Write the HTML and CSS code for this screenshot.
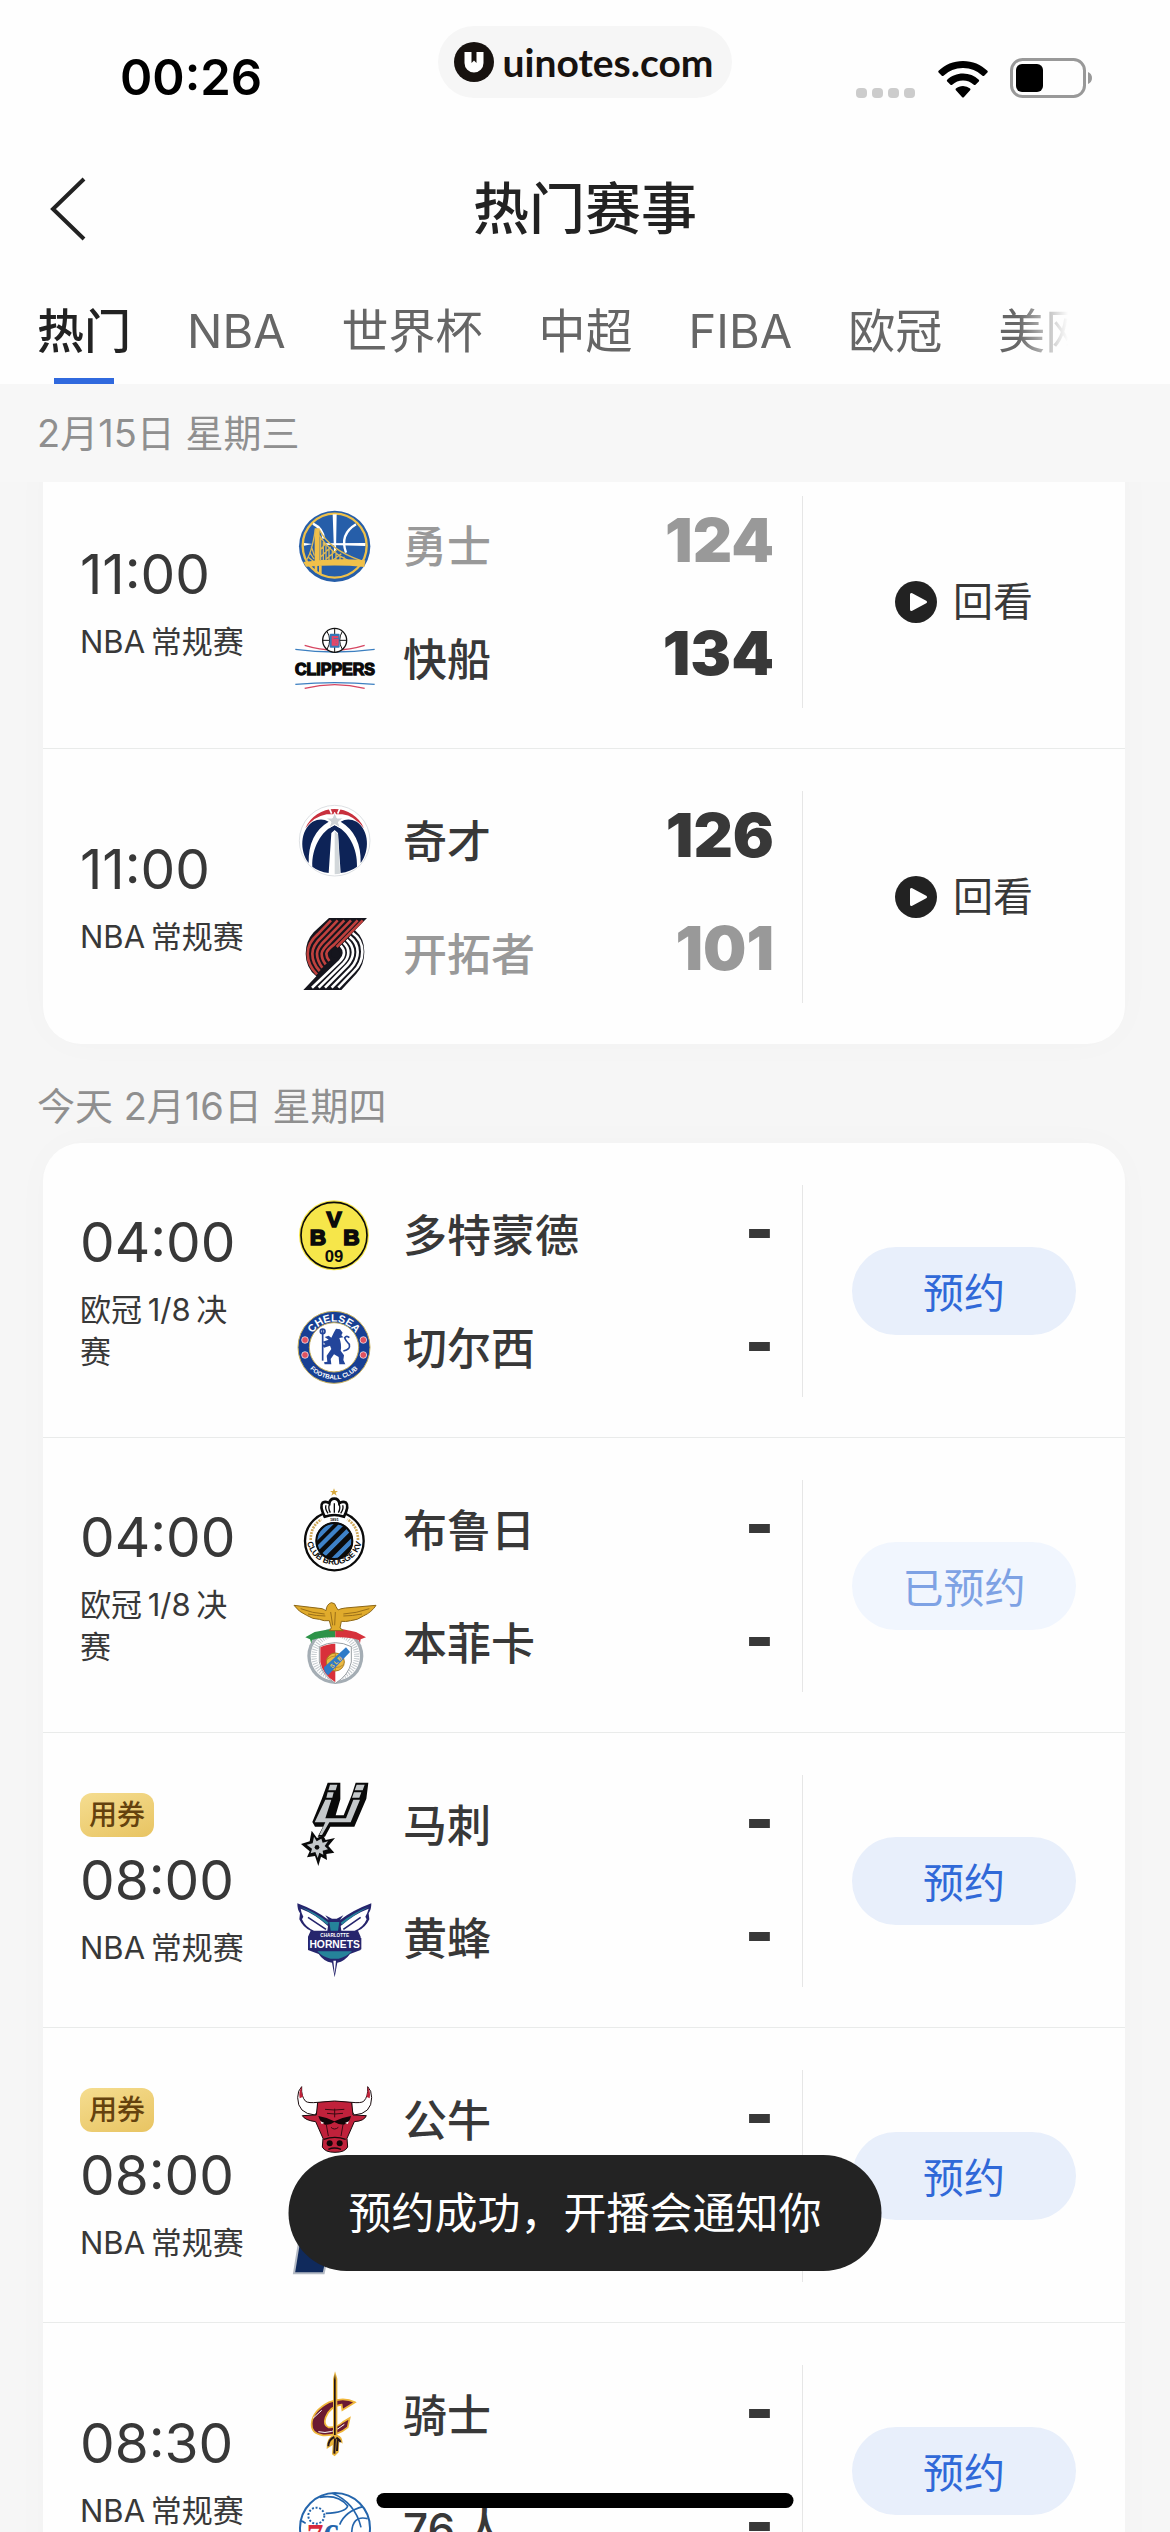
FILE: index.html
```html
<!DOCTYPE html>
<html lang="zh-CN">
<head>
<meta charset="utf-8">
<meta name="viewport" content="width=device-width, initial-scale=1">
<title>热门赛事</title>
<link rel="stylesheet" href="styles.css">
</head>
<body>
<div class="app">
  <header class="top">
    <div class="status">
      <span class="status-time">00:26</span>
      <span class="status-pill">
        <svg class="pill-logo" viewBox="0 0 40 40" aria-hidden="true"><circle cx="20" cy="20" r="20" fill="#17120f"/><path d="M10.500 10v11a9.500 9.500 0 0 0 19 0V10h-7v11l-2.500-2.500L17.500 21V10z" fill="#fff"/></svg>
        uinotes.com
      </span>
      <span class="status-icons">
        <svg class="dots" viewBox="0 0 60 10" aria-hidden="true"><g fill="#ccc"><rect width="11" height="10" rx="4"/><rect x="16" width="11" height="10" rx="4"/><rect x="32" width="11" height="10" rx="4"/><rect x="48" width="11" height="10" rx="4"/></g></svg>
        <svg class="wifi" viewBox="0 0 50 37" aria-hidden="true"><path d="M25 0C15.500 0 6.800 3.700.600 9.800c-.500.500-.500 1.200 0 1.700l3.200 3.200c.500.500 1.200.500 1.700 0A28 28 0 0 1 25 7a28 28 0 0 1 19.500 7.700c.500.500 1.200.500 1.700 0l3.200-3.200c.500-.500.500-1.200 0-1.700C43.200 3.700 34.500 0 25 0z"/><path d="M25 12.500c-6.100 0-11.600 2.300-15.800 6.200-.500.500-.500 1.200 0 1.700l3.300 3.300c.500.500 1.200.500 1.700 0a15.800 15.800 0 0 1 21.600 0c.500.500 1.200.500 1.700 0l3.300-3.300c.500-.500.500-1.200 0-1.700A23 23 0 0 0 25 12.500z"/><path d="M25 25c-2.700 0-5.200 1-7.100 2.600-.500.500-.500 1.200 0 1.700l6.300 6.900c.500.400 1.100.400 1.600 0l6.300-6.900c.500-.500.500-1.200 0-1.700A11 11 0 0 0 25 25z"/></svg>
        <svg class="battery" viewBox="0 0 82 40" aria-hidden="true"><rect x="1.500" y="1.500" width="73" height="37" rx="11" fill="none" stroke="#999" stroke-width="3"/><rect x="6" y="6" width="27" height="28" rx="6"/><path d="M78 14v12c2.500-1 4-3.300 4-6s-1.500-5-4-6z" fill="#999"/></svg>
      </span>
    </div>
    <div class="titlebar">
      <button class="back" type="button" aria-label="返回"><svg viewBox="0 0 36 64" aria-hidden="true"><path d="M34 2 3 32l31 30" fill="none" stroke="#222" stroke-width="4"/></svg></button>
      <h1>热门赛事</h1>
    </div>
    <nav class="tabs">
      <button class="tab active" type="button">热门</button>
      <button class="tab" type="button">NBA</button>
      <button class="tab" type="button">世界杯</button>
      <button class="tab" type="button">中超</button>
      <button class="tab" type="button">FIBA</button>
      <button class="tab" type="button">欧冠</button>
      <button class="tab" type="button">美网</button>
    </nav>
  </header>

  <main class="schedule">
    <h2 class="date pinned">2月15日 星期三</h2>
    <ul class="card continued">
      <li class="match">
        <div class="when"><time>11:00</time><span class="league">NBA&thinsp;常规赛</span></div>
        <div class="teams">
          <div class="team lost">
            <svg class="crest" viewBox="39 41 252 252" aria-hidden="true">
              <circle cx="164" cy="168" r="107" fill="#265ea9"/><circle cx="164" cy="166" r="96" fill="none" stroke="#efc14a" stroke-width="7"/>
              <g fill="none" stroke="#fff"><path d="M99 100q30 15 32 45" stroke-width="8"/><path d="M228 102q-50 30-30 85" stroke-width="7"/></g>
              <path d="M158 72h12l-2 110h-6zM130 159l126-1v9l-126-4zM72 158l26 3-26 5z" fill="#fff"/>
              <path d="M104 114h15v102h-15zM104 225h8v24l-8-4zM117 225h8v30l-8-3z" fill="#f0c04a"/>
              <path d="M76 213q18-18 30-95M118 118q30 60 125 93M118 135q30 50 90 77M84 200l16 13M89 186l13 20M94 168l9 28M122 140v70M130 150v62M138 162v50M147 170v42M157 178v34M168 186v27M180 193v20M192 199v14M122 200l30-30M122 178l16-20M138 207l32-28M158 210l26-20" fill="none" stroke="#dcb854" stroke-width="4"/>
              <path d="M70 215q90-14 186-5l-3 20q-80-8-175-1z" fill="#f0c04a"/>
            </svg>
            <span class="name">勇士</span><span class="score">124</span>
          </div>
          <div class="team">
            <svg class="crest" viewBox="39 379 252 252" aria-hidden="true">
              <path d="M74 464q45 14 90 14t90-14" fill="none" stroke="#d64560" stroke-width="4"/><path d="M46 476q60 8 118 8t120-8M46 581q118-10 238 0" fill="none" stroke="#3c7fc0" stroke-width="4"/><path d="M74 593q90-22 180 0" fill="none" stroke="#d64560" stroke-width="4"/>
              <circle cx="164" cy="449" r="36" fill="#fff" stroke="#111" stroke-width="4"/><path d="M128 449h72M164 413v72M141 422q16 27 0 54M187 422q-16 27 0 54" fill="none" stroke="#111" stroke-width="3"/>
              <rect x="149" y="429" width="30" height="42" rx="3" fill="#3578b8"/><path d="M175 439h-17v23h17M164 461v-14h9v14M164 455h9" fill="none" stroke="#e2476a" stroke-width="6"/>
              <text class="mark clippers" x="165" y="552">CLIPPERS</text>
            </svg>
            <span class="name">快船</span><span class="score">134</span>
          </div>
        </div>
        <div class="action"><a class="replay" href="#"><svg viewBox="0 0 42 42" aria-hidden="true"><circle cx="21" cy="21" r="21" fill="#222"/><path d="M16.500 13.500v15l14-7.500z" fill="#fff" stroke="#fff" stroke-width="3" stroke-linejoin="round"/></svg>回看</a></div>
      </li>
      <li class="match">
        <div class="when"><time>11:00</time><span class="league">NBA&thinsp;常规赛</span></div>
        <div class="teams">
          <div class="team">
            <svg class="crest" viewBox="39 25 252 252" aria-hidden="true">
              <circle cx="164" cy="150" r="106" fill="#fff" stroke="#ccd0d4" stroke-width="2"/>
              <path d="M76 113a96 96 0 0 1 176 0q-30-38-65-42l-47 0q-38 6-64 42z" fill="#c8303d"/>
              <path d="M147 50l8 19M181 50l-8 19" stroke="#fff" stroke-width="5"/>
              <path d="M86 217C58 180 60 120 98 93q26-13 48 0Q84 130 86 217zM242 217c28-37 26-97-12-124q-26-13-48 0 62 37 60 124z" fill="#0d2357"/>
              <path d="M97 228c-2-54 26-108 67-124 41 16 69 70 67 124q-20 15-49 19l-8-120-10-9-10 9-8 120q-30-4-49-19z" fill="#0d2357"/>
              <path d="M164 122l10 8 6 119-16 2z" fill="#d2d7da"/>
              <path d="M164 65l7 17h19l-15 12 6 18-17-11-17 11 6-18-15-12h19z" fill="#cdd2d6" stroke="#fff" stroke-width="3"/>
            </svg>
            <span class="name">奇才</span><span class="score">126</span>
          </div>
          <div class="team lost">
            <svg class="crest" viewBox="39 366 252 252" aria-hidden="true">
              <path d="M147 384h114l-36 37q28 24 28 64 0 40-24 66l-45 49H70l39-41q-32-26-32-68 0-38 24-64z" fill="#15151d"/>
              <g fill="none" stroke="#c0413e" stroke-width="8"><path d="M153 391l-40 42q-30 26-30 58 0 34 28 62"/><path d="M173 391l-46 48q-30 28-30 52 0 28 22 52"/><path d="M193 391l-54 56q-28 26-28 44 0 20 16 42"/><path d="M213 391l-62 64q-26 24-26 36 0 16 12 32"/><path d="M233 391l-70 72q-24 18-24 28t9 22"/><path d="M248 391l-78 80"/></g>
              <g fill="none" stroke="#fff" stroke-width="8"><path d="M218 429q29 20 29 56 0 34-26 60l-46 48"/><path d="M209 440q24 18 24 46 0 26-20 48l-58 59"/><path d="M200 449q19 16 19 38 0 20-17 38l-67 68"/><path d="M191 458q14 12 14 30 0 16-15 32l-74 73"/><path d="M182 467q10 10 10 22 0 12-12 24l-84 80"/></g>
              <circle cx="166" cy="491" r="13" fill="#15151d"/>
            </svg>
            <span class="name">开拓者</span><span class="score">101</span>
          </div>
        </div>
        <div class="action"><a class="replay" href="#"><svg viewBox="0 0 42 42" aria-hidden="true"><circle cx="21" cy="21" r="21" fill="#222"/><path d="M16.500 13.500v15l14-7.500z" fill="#fff" stroke="#fff" stroke-width="3" stroke-linejoin="round"/></svg>回看</a></div>
      </li>
    </ul>

    <h2 class="date">今天 2月16日 星期四</h2>
    <ul class="card">
      <li class="match">
        <div class="when"><time>04:00</time><span class="league">欧冠&thinsp;1/8&thinsp;决赛</span></div>
        <div class="teams">
          <div class="team">
            <svg class="crest" viewBox="39 38 252 252" aria-hidden="true">
              <circle cx="162" cy="165" r="105" fill="#f6e64a"/><circle cx="162" cy="165" r="99" fill="none" stroke="#0b0b0b" stroke-width="5"/>
              <text class="mark bvb" x="114" y="193">B</text><text class="mark bvb" x="162" y="141">V</text><text class="mark bvb" x="214" y="193">B</text><text class="mark bvb-year" x="162" y="246">09</text>
            </svg>
            <span class="name">多特蒙德</span><span class="score">-</span>
          </div>
          <div class="team">
            <svg class="crest" viewBox="39 377 252 252" aria-hidden="true">
              <defs><path id="che-top" d="M85 501a77 77 0 0 1 154 0"/><path id="che-bottom" d="M66 501a96 96 0 0 0 192 0"/></defs>
              <circle cx="162" cy="501" r="108" fill="#173f93" stroke="#c6ae5a" stroke-width="3"/><circle cx="162" cy="501" r="74" fill="#fff" stroke="#c6ae5a" stroke-width="3"/>
              <text class="mark chelsea"><textPath href="#che-top" startOffset="50%">CHELSEA</textPath></text>
              <text class="mark chelsea-small"><textPath href="#che-bottom" startOffset="50%">FOOTBALL CLUB</textPath></text>
              <g fill="#e05260" stroke="#fff" stroke-width="2"><circle cx="75" cy="479" r="10"/><circle cx="75" cy="524" r="10"/><circle cx="250" cy="479" r="10"/><circle cx="250" cy="524" r="10"/></g>
              <path d="M128 446v95" stroke="#23459a" stroke-width="5"/><circle cx="128" cy="453" r="7" fill="none" stroke="#23459a" stroke-width="5"/>
              <path d="M162 456l6-11 12 2 8 10-4 8 6 6-12 2q8 20 4 38l10 14-2 14 6 13h-18l-2-22-14-8-10 14 2 16h-20l-2-6 10-2-2-18 14-20-4-10-18 6-6-8 10-2-8-8 18-6-12-8 12-4 8 6z" fill="#23459a"/>
              <path d="M190 512q22-4 18-20-12-12-14-20 6-8 14 0" fill="none" stroke="#23459a" stroke-width="5"/>
            </svg>
            <span class="name">切尔西</span><span class="score">-</span>
          </div>
        </div>
        <div class="action"><button class="book" type="button">预约</button></div>
      </li>
      <li class="match">
        <div class="when"><time>04:00</time><span class="league">欧冠&thinsp;1/8&thinsp;决赛</span></div>
        <div class="teams">
          <div class="team">
            <svg class="crest" viewBox="39 52 252 252" aria-hidden="true">
              <defs><path id="bru-arc" d="M81 212a83 83 0 0 0 164 0"/><clipPath id="bru-clip"><circle cx="163" cy="211" r="52"/></clipPath></defs>
              <path d="M162 53l3 8h9l-7 5 3 9-8-6-8 6 3-9-7-5h9z" fill="#d8a93c"/>
              <circle cx="163" cy="211" r="88" fill="#fff" stroke="#0a0a0a" stroke-width="7"/>
              <path d="M92 208q0-42 32-62M234 208q0-42-32-62" fill="none" stroke="#d0a95a" stroke-width="8" stroke-dasharray="6 3"/>
              <path d="M134 138q-16-32-6-42 10-6 20 2 2-14 15-14t15 14q10-8 20-2 10 10-6 42-29-10-58 0z" fill="#fff" stroke="#0a0a0a" stroke-width="8"/>
              <path d="M163 98v28M149 100q-6 12 2 26M177 100q6 12-2 26M138 104q-4 10 6 24M188 104q4 10-6 24" fill="none" stroke="#0a0a0a" stroke-width="4"/>
              <text class="mark bru-year" x="163" y="151">1891</text>
              <circle cx="163" cy="211" r="56" fill="#0b0b0b"/>
              <g clip-path="url(#bru-clip)" stroke="#3e82c8" stroke-width="13"><path d="M86 226l90-90M96 250l110-110M118 266l110-110M146 280l90-90"/></g>
              <circle cx="163" cy="211" r="54" fill="none" stroke="#0b0b0b" stroke-width="6"/>
              <text class="mark bru"><textPath href="#bru-arc" startOffset="50%">CLUB BRUGGE KV</textPath></text>
            </svg>
            <span class="name">布鲁日</span><span class="score">-</span>
          </div>
          <div class="team">
            <svg class="crest" viewBox="39 391 252 252" aria-hidden="true">
              <circle cx="166" cy="556" r="84" fill="#a4adb4"/><circle cx="166" cy="556" r="74" fill="#fff"/><circle cx="166" cy="556" r="64" fill="none" stroke="#c2c8cc" stroke-width="16" stroke-dasharray="3 4"/>
              <path d="M118 528q24-12 48-12t48 12v46q-8 40-48 64-40-24-48-64z" fill="#fff" stroke="#9aa0a4" stroke-width="3"/><path d="M121 530q22-11 45-11v116q-38-23-45-61z" fill="#d9303a"/>
              <circle cx="166" cy="574" r="27" fill="#eab944" stroke="#a87a1c" stroke-width="3"/><path d="M141 566q25-20 50 0M141 582q25 18 50 0M166 548v52" fill="none" stroke="#a87a1c" stroke-width="2"/>
              <path d="M132 590l66-60 12 14-66 70q-12-8-12-24z" fill="#2f7bc8"/>
              <text class="mark slb" x="168" y="580" transform="rotate(-44 168 574)">S L B</text>
              <path d="M76 500l28-16q60-12 62-8v24q-40-2-70 8l-2 10-4-12z" fill="#2d9348"/><path d="M258 500l-30-16q-50-12-62-8v24q40-2 70 8l4 10 2-12z" fill="#d6323c"/>
              <path d="M42 404q50 6 84 10 10 4 12 6 2-20 16-24 12 0 14 12l6 10q6-4 22-6l92-8q-12 20-38 32-16 12-38 14-16 4-28 2l-4 20 10 8h-42l6-8-6-22q-16 2-30-4-20 0-38-12-24-10-38-30z" fill="#e0ab2c" stroke="#8d6718" stroke-width="3"/>
              <path d="M62 414q36 14 72 16M84 430q26 6 52 6M268 414q-40 14-78 16M246 430q-30 6-56 6M152 424l6 40M166 424l-2 40" fill="none" stroke="#9b6f18" stroke-width="3"/>
            </svg>
            <span class="name">本菲卡</span><span class="score">-</span>
          </div>
        </div>
        <div class="action"><button class="book booked" type="button">已预约</button></div>
      </li>
      <li class="match">
        <div class="when"><span class="coupon">用券</span><time>08:00</time><span class="league">NBA&thinsp;常规赛</span></div>
        <div class="teams">
          <div class="team">
            <svg class="crest" viewBox="39 67 252 252" aria-hidden="true">
              <path d="M143 66h38v50l-14 48h24l24-60 12-38h38l-6 48-36 84h-72l-16 30h-22l16-30h-24l-8-14 28-68z" fill="#090909"/>
              <path d="M150 72h22l-5 17h-22zM143 95h18l-4 16h-18zM230 72h24l-6 17h-24zM222 95h22l-6 16h-22z" fill="#c4c8ca"/>
              <path d="M136 117h18l-18 56h62l22-56h20l-28 68h-64l-22 38h-8l18-38h-32z" fill="#c4c8ca"/>
              <path d="M95 210l16 22 18-8 8 14 28-6-20 24 18 20-24 4 2 18-18-10-8 28-10-30-24 4 8-18-26-22 26-8z" fill="#0a0a0a"/>
              <path d="M102 228l8 14 14-8 4 12 16-4-10 14 10 10-16 4 2 12-12-6-5 16-7-18-14 4 4-14-16-12 18-4z" fill="#c4c8ca"/><circle cx="111" cy="260" r="7" fill="#0a0a0a"/>
            </svg>
            <span class="name">马刺</span><span class="score">-</span>
          </div>
          <div class="team">
            <svg class="crest" viewBox="39 406 252 252" aria-hidden="true">
              <path d="M52 428q54 20 94 50l-10-14 20 10h14l20-10-10 14q40-30 94-50 0 20-8 30l2 18q-12 26-34 34l8 18v40l-32 12q-16 22-38 26l-8 44-8-44q-26-4-40-26l-32-12v-40l8-18q-22-8-34-34l2-18q-8-10-8-30z" fill="#26256d"/>
              <path d="M62 444q44 16 82 52l-2 14h-40q-26-10-36-34l4-8q-6-10-8-24zM266 444q-44 16-84 52l2 14h40q26-10 36-34l-4-8q6-10 10-24z" fill="#fff"/>
              <path d="M60 438q46 16 86 48l-4 6q-38-32-82-54zM268 438q-46 16-86 48l4 6q38-32 82-54zM148 484h30l-4 26h-22zM112 572h104q-18 18-40 22h-24q-24-4-40-22z" fill="#25839a"/>
              <path d="M84 470l54 36M242 470l-52 36" stroke="#26256d" stroke-width="5"/>
              <path d="M84 532h160v34H84z" fill="#26256d"/><text class="mark charlotte" x="164" y="530">CHARLOTTE</text><text class="mark hornets" x="164" y="562">HORNETS</text>
              <path d="M160 600h8l-4 40z" fill="#fff"/>
            </svg>
            <span class="name">黄蜂</span><span class="score">-</span>
          </div>
        </div>
        <div class="action"><button class="book" type="button">预约</button></div>
      </li>
      <li class="match">
        <div class="when"><span class="coupon">用券</span><time>08:00</time><span class="league">NBA&thinsp;常规赛</span></div>
        <div class="teams">
          <div class="team">
            <svg class="crest" viewBox="-126 -126 252 252" aria-hidden="true">
              <path d="M-100-100q-2 30 12 44 8 6 36 3v26l-8 12q-52-4-52-52 0-22 12-33zM98-100q2 30-12 44-8 6-36 3v26l8 12q52-4 52-52 0-22-12-33z" fill="#fff" stroke="#18090c" stroke-width="3"/>
              <path d="M-100-100q-2 16 4 30l-10 5q-4-20 6-35zM98-100q2 16-4 30l10 5q4-20-6-35z" fill="#bf2038"/>
              <path d="M-52-53q50-8 102 0l4 38 40 2q-6 16-36 18l-22 50 2 26q-8 16-38 16t-38-16l2-26-22-50q-32-4-40-18l42-2z" fill="#c0213b" stroke="#18090c" stroke-width="3"/>
              <path d="M-50-12q26 4 48 16 24-12 50-16-4 22-22 26-16 0-28-8-12 10-28 8-14-6-20-26z" fill="#120507"/><path d="M-44 4l12 5-8 3zM42 4l-12 5 8 3z" fill="#fff"/>
              <path d="M-30-32q28 4 58 0M-24-20q24 4 48 0M-1-34v26M-26 14l6 34M24 14l-6 34M-12 22q10 10 22 0" fill="none" stroke="#3a0a12" stroke-width="3"/>
              <path d="M-34 58q34-12 66 0M-20 88q18-8 38 0" fill="none" stroke="#18090c" stroke-width="4"/><circle cx="-16" cy="70" r="9" fill="#120507"/><circle cx="14" cy="70" r="9" fill="#120507"/>
            </svg>
            <span class="name">公牛</span><span class="score">-</span>
          </div>
          <div class="team">
            <svg class="crest" viewBox="-126 -126 252 252" aria-hidden="true">
              <path d="M-88-96H40q70 0 70 60T30 46h-48l-16 75h-89z" fill="#102a5c" stroke="#b4bac4" stroke-width="6"/><circle cx="26" cy="-28" r="40" fill="#f3b933"/>
            </svg>
            <span class="name">步行者</span><span class="score">-</span>
          </div>
        </div>
        <div class="action"><button class="book" type="button">预约</button></div>
      </li>
      <li class="match">
        <div class="when"><time>08:30</time><span class="league">NBA&thinsp;常规赛</span></div>
        <div class="teams">
          <div class="team">
            <svg class="crest" viewBox="-126 -126 252 252" aria-hidden="true">
              <path d="M60-38q-34-18-78 0-50 26-52 64-2 30 34 35 44 2 74-24l6-28-20 12q-20 18-44 16-16-6-8-30 14-34 48-38l2 16z" fill="#6a1a32" stroke="#efb63a" stroke-width="5"/>
              <path d="M-66 10l26-24M-50 50q40 10 78-22" fill="none" stroke="#fff" stroke-width="3"/>
              <path d="M0-131l7 22v172h-13v-172z" fill="#e6b23f"/><path d="M0-122l2 18v168h-5v-168z" fill="#1d1113"/>
              <path d="M-6 60h13q16 4 16 26l-10-8-2 34-12 12-8-6 2-28-18 12q-2-32 19-42z" fill="#e8b33a"/><path d="M-2 66q-18 8-18 28M4 68q12 8 12 14M0 70l-2 46M8 72l-2 36" fill="none" stroke="#25151a" stroke-width="6"/>
            </svg>
            <span class="name">骑士</span><span class="score">-</span>
          </div>
          <div class="team">
            <svg class="crest" viewBox="-126 -126 252 252" aria-hidden="true">
              <circle r="105" fill="#fff" stroke="#2465ac" stroke-width="6"/>
              <path d="M-46-92Q10-102 38-66 32-46-28-44M-8-104Q60-76 78-2M84-64Q30-50 14-10M98-28Q50-40 50 20M-104-22Q-96-20-88-14" fill="none" stroke="#2465ac" stroke-width="5"/>
              <circle cx="-56" cy="-37" r="24" fill="none" stroke="#2465ac" stroke-width="6" stroke-dasharray="6 5"/>
              <text class="mark seven" x="-60" y="56">7</text><text class="mark six" x="-10" y="56">6</text>
            </svg>
            <span class="name">76&thinsp;人</span><span class="score">-</span>
          </div>
        </div>
        <div class="action"><button class="book" type="button">预约</button></div>
      </li>
    </ul>
  </main>

  <div class="toast" role="status">预约成功，开播会通知你</div>
  <div class="home-indicator"></div>
</div>
</body>
</html>
```

FILE: styles.css
```css
* { box-sizing: border-box; }

body {
  margin: 0;
  background: #f6f6f6;
  color: #383838;
  font-family: Inter, "Noto Sans CJK SC", sans-serif;
}

h1, h2, ul { margin: 0; padding: 0; font-weight: 400; }
ul { list-style: none; }
svg { display: block; flex: none; }
button { border: 0; padding: 0; background: none; color: inherit; font: inherit; }

.app {
  position: relative;
  display: flex;
  flex-direction: column;
  height: 100vh;
  overflow: hidden;
}

/* Header */
.top { flex: none; background: #fefefe; }

.status {
  display: grid;
  grid-template-columns: 1fr auto 1fr;
  height: 124px;
  padding: 26px 78px 0 120px;
  color: #000;
}
.status-time { padding-top: 22px; font-size: 49px; font-weight: 600; line-height: 60px; }
.status-pill {
  display: flex;
  align-items: center;
  gap: 8px;
  height: 72px;
  margin-right: 42px;
  padding: 0 18px 0 16px;
  border-radius: 36px;
  background: #f6f6f6;
  color: #17120f;
  font-family: Lato, sans-serif;
  font-size: 39px;
  font-weight: 700;
  line-height: 68px;
}
.pill-logo { width: 40px; height: 40px; }
.status-icons {
  display: flex;
  justify-content: flex-end;
  align-items: flex-end;
  gap: 22px;
  height: 72px;
}
.dots { width: 60px; height: 10px; }
.wifi { width: 50px; height: 37px; }
.battery { width: 82px; height: 40px; }

.titlebar {
  display: grid;
  grid-template-columns: 1fr auto 1fr;
  align-items: center;
  height: 170px;
  padding: 0 50px;
}
.titlebar h1 { grid-column: 2; color: #222; font-size: 56px; font-weight: 500; line-height: 80px; }
.back svg { width: 36px; height: 64px; }

.tabs {
  display: flex;
  gap: 56px;
  height: 90px;
  margin-right: 102px;
  padding-left: 37px;
  overflow: hidden;
  color: #666;
  -webkit-mask-image: linear-gradient(to left, transparent, #000 50px);
  mask-image: linear-gradient(to left, transparent, #000 50px);
}
.tab {
  display: flex;
  flex: none;
  flex-direction: column;
  align-items: center;
  justify-content: space-between;
  font-size: 47px;
  line-height: 74px;
}
.tab.active { color: #222; font-weight: 500; }
.tab.active::after { content: ""; width: 60px; height: 6px; background: #3069de; }

/* Schedule */
.schedule { flex: 1; min-height: 0; overflow: hidden; }

.date {
  padding: 36px 37px 10px;
  color: #8f8f8f;
  font-size: 38px;
  line-height: 53px;
}
.date.pinned { position: relative; z-index: 1; padding: 23px 37px 22px; background: #f7f7f7; }

.card {
  margin: 0 45px 0 43px;
  border-radius: 38px;
  background: #fefefe;
  box-shadow: 0 0 40px rgba(0, 0, 0, .02);
}
/* scrolled so that its first match slides under the pinned date */
.card.continued { margin-top: -28px; border-radius: 0 0 38px 38px; }

.match {
  display: flex;
  align-items: center;
  padding: 42px 0 40px 37px;
  border-bottom: 1px solid #e9ebea;
}
.match:last-child { border-bottom-color: transparent; }

.when {
  display: flex;
  flex: 0 0 213px;
  flex-direction: column;
  align-items: flex-start;
  padding-right: 46px;
}
.when time { font-size: 55px; line-height: 66px; }
.league { margin-top: 14px; font-size: 31px; line-height: 42px; }
.coupon {
  margin-bottom: 10px;
  padding: 0 9px;
  border-radius: 12px;
  background: linear-gradient(160deg, #f5dd90, #e8c462);
  color: #64420e;
  font-size: 28px;
  font-weight: 500;
  line-height: 44px;
}

.teams {
  display: flex;
  flex: 1;
  flex-direction: column;
  justify-content: center;
  gap: 29px;
  height: 212px;
  padding-right: 28px;
  border-right: 1px solid #e6e6e6;
}
.team { display: flex; align-items: center; gap: 26px; height: 84px; }
.crest { width: 84px; height: 84px; overflow: visible; }
.name { flex: 1; padding-bottom: 3px; font-size: 44px; font-weight: 500; }
.score { align-self: flex-start; font-size: 61px; font-weight: 900; line-height: 72px; }
.lost { color: #999; }

.action { display: flex; flex: 0 0 322px; justify-content: center; }
.replay {
  display: flex;
  align-items: center;
  gap: 16px;
  color: inherit;
  font-size: 40px;
  line-height: 58px;
  text-decoration: none;
}
.replay svg { width: 42px; height: 42px; }
.book {
  width: 224px;
  height: 88px;
  padding-bottom: 3px;
  border-radius: 44px;
  background: #e8effb;
  color: #3069d8;
  font-size: 41px;
}
.booked { background: #f1f6fe; color: #7ea2e4; }

/* Lettering inside the crests */
.mark { font-family: "Liberation Sans", sans-serif; font-weight: 700; text-anchor: middle; }
.clippers { fill: #0a0a0a; stroke: #0a0a0a; stroke-width: 4px; font-size: 48px; }
.bvb { fill: #0b0b0b; stroke: #0b0b0b; stroke-width: 5px; font-size: 68px; }
.bvb-year { fill: #0b0b0b; font-size: 50px; }
.chelsea { fill: #fff; font-size: 32px; }
.chelsea-small { fill: #fff; font-size: 19px; }
.bru { fill: #0a0a0a; font-size: 25px; }
.bru-year { fill: #0a0a0a; font-size: 12px; }
.slb { fill: #f3cb52; font-size: 17px; }
.charlotte { fill: #fff; font-size: 14px; }
.hornets { fill: #fff; font-size: 31px; }
.seven, .six { font-family: "Liberation Serif", serif; font-size: 100px; }
.seven { fill: #d8293c; }
.six { fill: #2465ac; }

/* Overlays */
.toast {
  position: absolute;
  bottom: 261px;
  left: 50%;
  padding: 28px 60px;
  border-radius: 58px;
  background: #232323;
  color: #fff;
  font-size: 43px;
  line-height: 60px;
  white-space: nowrap;
  transform: translateX(-50%);
}
.home-indicator {
  position: absolute;
  bottom: 24px;
  left: 50%;
  width: 417px;
  height: 15px;
  border-radius: 8px;
  background: #000;
  transform: translateX(-50%);
}
```
